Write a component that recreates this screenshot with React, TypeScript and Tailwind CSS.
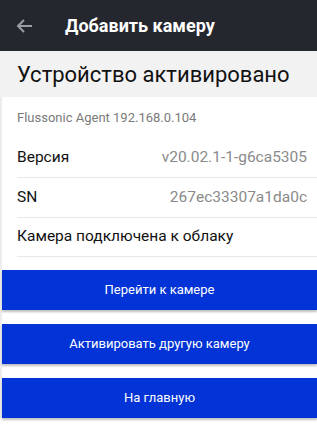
import React from "react";

export default function App() {
  const btn =
    "h-[40px] w-full bg-[#0233d6] text-white text-[13px] flex items-center justify-center shadow-[0_2px_2px_rgba(0,0,0,0.25)]";
  return (
    <div className="w-[317px] h-[424px] overflow-hidden bg-white font-['Roboto',sans-serif]">
      <div className="h-[51px] bg-[#25272e] flex items-center">
        <svg width="24" height="24" viewBox="0 0 24 24" className="ml-[13px]" fill="none" stroke="#9b9da4" strokeWidth="2">
          <path d="M19 12H5" />
          <path d="M11 6l-6 6 6 6" />
        </svg>
        <span className="ml-[28px] text-white font-bold text-[18px]">Добавить камеру</span>
      </div>
      <div className="h-[46px] bg-[#f2f2f2] flex items-center pl-[17px] text-[22px] text-[#111]">
        Устройство активировано
      </div>
      <div className="border-l-2 border-[#ededed]">
        <div className="h-[41px] flex items-center pl-[15px] text-[13px] text-[#7a7a7a]">
          Flussonic Agent 192.168.0.104
        </div>
        <div className="pl-[15px]">
          <div className="h-[40px] flex items-center justify-between pr-[10px] border-b border-[#e8e8e8] text-[15.5px]">
            <span className="text-[#111]">Версия</span>
            <span className="text-[#8a8a8a]">v20.02.1-1-g6ca5305</span>
          </div>
          <div className="h-[40px] flex items-center justify-between pr-[10px] border-b border-[#e8e8e8] text-[15.5px]">
            <span className="text-[#111]">SN</span>
            <span className="text-[#8a8a8a]">267ec33307a1da0c</span>
          </div>
          <div className="h-[39px] flex items-center border-b border-[#e8e8e8] text-[15.5px] text-[#111]">
            Камера подключена к облаку
          </div>
        </div>
        <div className="flex flex-col gap-[14px] pt-[13px]">
          <div className={btn}>Перейти к камере</div>
          <div className={btn}>Активировать другую камеру</div>
          <div className={btn}>На главную</div>
        </div>
      </div>
    </div>
  );
}
